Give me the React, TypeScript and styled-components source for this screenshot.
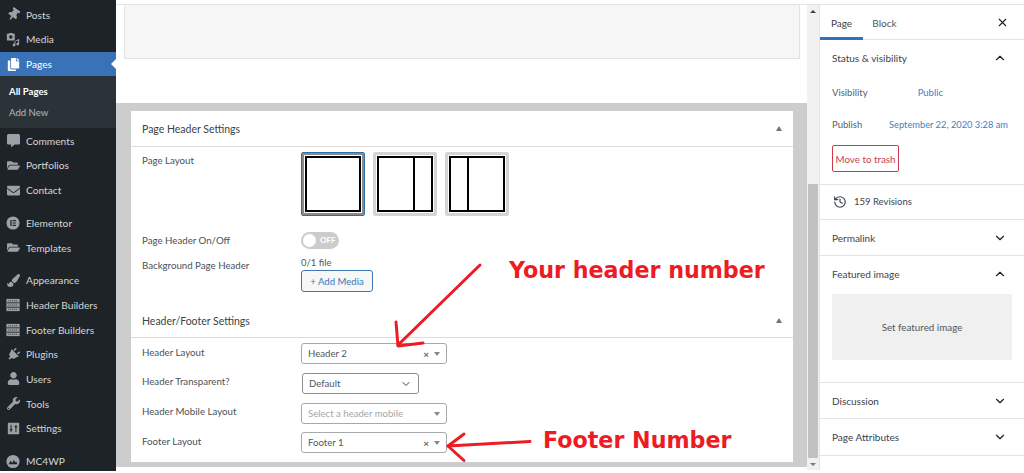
import React from "react";
import styled, { createGlobalStyle } from "styled-components";
import {
  FaThumbtack,
  FaCopy,
  FaCommentAlt,
  FaFolderOpen,
  FaEnvelope,
  FaPaintBrush,
  FaPlug,
  FaUser,
  FaWrench,
} from "react-icons/fa";
import { LuChevronUp, LuChevronDown, LuHistory, LuX } from "react-icons/lu";

const uiFont = `Lato, "Open Sans", sans-serif`;

const GlobalStyle = createGlobalStyle`
  html, body {
    margin: 0;
    padding: 0;
    background: #fff;
    overflow: hidden;
  }
  * { box-sizing: border-box; }
  body { font-family: ${uiFont}; }
`;

const Page = styled.div`
  position: relative;
  width: 1024px;
  height: 473px;
  overflow: hidden;
  background: #fff;
`;

const Frame = styled.div`
  display: flex;
  height: 471px;
  overflow: hidden;
`;

/* admin menu */
const Sidebar = styled.nav`
  width: 116px;
  flex: none;
  background: #1d2327;
  padding-top: 2.4px;
  color: #d3d6d9;
  font-size: 10.2px;
`;

const MenuRow = styled.div<{ $active?: boolean; $gap?: number }>`
  position: relative;
  display: flex;
  align-items: center;
  height: 24.7px;
  margin-top: ${({ $gap }) => $gap ?? 0}px;
  padding-left: 6px;
  gap: 6px;
  background: ${({ $active }) => ($active ? "#3a72b8" : "transparent")};
  color: ${({ $active }) => ($active ? "#fff" : "inherit")};
`;

const MenuIcon = styled.span<{ $active?: boolean }>`
  display: flex;
  align-items: center;
  justify-content: center;
  width: 14px;
  height: 14px;
  flex: none;
  color: ${({ $active }) => ($active ? "#fff" : "#9ca1a7")};
  font-size: 13px;
`;

const ActiveNotch = styled.span`
  position: absolute;
  right: 0;
  top: 7px;
  border-style: solid;
  border-width: 5.5px 5.5px 5.5px 0;
  border-color: transparent #fff transparent transparent;
`;

const SubMenu = styled.div`
  background: #2c3338;
  height: 52px;
  padding-top: 5px;
`;

const SubItem = styled.div<{ $current?: boolean }>`
  height: 21px;
  line-height: 21px;
  padding-left: 9px;
  font-size: 9.6px;
  font-weight: ${({ $current }) => ($current ? 700 : 400)};
  color: ${({ $current }) => ($current ? "#fff" : "#b4b9be")};
`;

/* editor column */
const Main = styled.main`
  flex: 1;
  display: flex;
  flex-direction: column;
  border-top: 1px solid #e4e4e4;
  margin-top: 4px;
  min-width: 0;
`;

const ContentBox = styled.div`
  margin-left: 8px;
  width: 676px;
  height: 54px;
  background: #f6f6f6;
  border: 1px solid #e2e2e2;
  border-top: none;
  flex: none;
`;

const MetaWrap = styled.div`
  margin-top: 44px;
  height: 364px;
  background: #cdcdcd;
  padding: 8px 14px 5px 15px;
`;

const MetaPanel = styled.div`
  height: 351px;
  background: #fff;
  color: #50575e;
  font-size: 9.6px;
`;

const MetaHeader = styled.div<{ $height: number; $drop?: number }>`
  display: flex;
  align-items: center;
  justify-content: space-between;
  height: ${({ $height }) => $height}px;
  padding: ${({ $drop }) => $drop ?? 0}px 11px 0;
  border-bottom: 1px solid #dcdcde;
  color: #3c434a;
  font-size: 10.5px;
`;

const UpCaret = styled.span`
  width: 0;
  height: 0;
  border-style: solid;
  border-width: 0 3.5px 5px 3.5px;
  border-color: transparent transparent #70757a transparent;
`;

const FormRow = styled.div<{ $height: number; $top?: number }>`
  display: grid;
  grid-template-columns: 159px 1fr;
  height: ${({ $height }) => $height}px;
  padding-left: 11px;
  padding-top: ${({ $top }) => $top ?? 0}px;
`;

const RowLabel = styled.label<{ $drop?: number }>`
  font-size: 9.7px;
  line-height: 14px;
  padding-top: ${({ $drop }) => $drop ?? 0}px;
  color: #4a5157;
`;

const LayoutChoices = styled.div`
  display: flex;
  gap: 8px;
`;

const LayoutChoice = styled.div<{ $selected?: boolean }>`
  width: 64px;
  height: 64px;
  padding: 3px;
  background: #fff;
  border: 1px solid ${({ $selected }) => ($selected ? "#2f6ea5" : "#d4d4d4")};
  border-radius: 2px;
  box-shadow: inset 0 0 0 2px ${({ $selected }) => ($selected ? "#8b8b8b" : "#d4d4d4")};
`;

const LayoutPicture = styled.div<{ $columns: string }>`
  display: grid;
  grid-template-columns: ${({ $columns }) => $columns};
  gap: 2px;
  height: 100%;
  background: #000;
  padding: 2px;
`;

const LayoutCell = styled.div`
  background: #fff;
`;

const Toggle = styled.div`
  position: relative;
  width: 38px;
  height: 17px;
  border-radius: 9px;
  background: #ccc;
  color: #fff;
  font-size: 8px;
  font-weight: 700;
  line-height: 16px;
  padding-left: 19px;
`;

const ToggleKnob = styled.span`
  position: absolute;
  left: 2px;
  top: 2px;
  width: 13px;
  height: 13px;
  border-radius: 50%;
  background: #fff;
`;

const FileCount = styled.div`
  font-size: 9.5px;
  line-height: 12px;
  color: #50575e;
`;

const AddMedia = styled.button`
  display: block;
  width: 72px;
  height: 22px;
  margin-top: 1px;
  padding: 0;
  background: #f6f7f7;
  border: 1px solid #3f78b5;
  border-radius: 3px;
  color: #3f78b5;
  font: 400 9.6px ${uiFont};
`;

const SelectBox = styled.div<{ $width: number; $offset?: number; $native?: boolean }>`
  display: flex;
  align-items: center;
  width: ${({ $width }) => $width}px;
  height: 21px;
  margin-left: ${({ $offset }) => $offset ?? 0}px;
  padding: 0 6px;
  border: 1px solid ${({ $native }) => ($native ? "#8c8f94" : "#a5a9ad")};
  border-radius: 3px;
  background: #fff;
  font-size: 9.6px;
  color: #50575e;
`;

const SelectValue = styled.span<{ $placeholder?: boolean }>`
  flex: 1;
  color: ${({ $placeholder }) => ($placeholder ? "#a4a7aa" : "#50575e")};
`;

const ClearMark = styled.span`
  color: #666;
  font-size: 10px;
  font-weight: 700;
  margin-right: 5px;
`;

const DownCaret = styled.span`
  width: 0;
  height: 0;
  border-style: solid;
  border-width: 4px 3.5px 0 3.5px;
  border-color: #888 transparent transparent transparent;
`;

/* scrollbar between editor and inspector */
const ScrollBar = styled.div`
  position: relative;
  width: 13px;
  flex: none;
  margin-top: 4px;
  height: 466px;
  background: #f1f1f1;
  border-top: 1px solid #e4e4e4;
  border-right: 1px solid #e4e4e4;
`;

const ScrollThumb = styled.div`
  position: absolute;
  left: 1px;
  right: 1px;
  top: 179px;
  height: 274px;
  background: #c1c1c1;
`;

const ScrollArrow = styled.span<{ $down?: boolean }>`
  position: absolute;
  left: 3px;
  ${({ $down }) => ($down ? "bottom: 4px;" : "top: 5px;")}
  border-style: solid;
  border-width: ${({ $down }) => ($down ? "3px 3px 0 3px" : "0 3px 3px 3px")};
  border-color: ${({ $down }) =>
    $down
      ? "#777 transparent transparent transparent"
      : "transparent transparent #444 transparent"};
`;

/* settings inspector */
const Inspector = styled.aside`
  width: 204px;
  height: 466px;
  flex: none;
  margin-top: 4px;
  border-top: 1px solid #e4e4e4;
  color: #3c434a;
  font-size: 10px;
  overflow: hidden;
`;

const Tabs = styled.div`
  display: flex;
  align-items: stretch;
  height: 35px;
  border-bottom: 1px solid #e2e4e7;
`;

const Tab = styled.div<{ $active?: boolean }>`
  display: flex;
  align-items: center;
  justify-content: center;
  width: 43px;
  height: 35px;
  color: ${({ $active }) => ($active ? "#3c434a" : "#50575e")};
  border-bottom: ${({ $active }) => ($active ? "3px solid #2f72b8" : "none")};
  padding-top: ${({ $active }) => ($active ? 3 : 0)}px;
`;

const TabClose = styled.span`
  margin-left: auto;
  margin-right: 15px;
  display: flex;
  align-items: center;
  font-size: 13px;
  color: #1e1e1e;
`;

const Section = styled.section<{ $height: number }>`
  height: ${({ $height }) => $height}px;
  padding: 0 12px;
  border-bottom: 1px solid #e2e4e7;
`;

const SectionHead = styled.div`
  display: flex;
  align-items: center;
  justify-content: space-between;
  height: 35px;
  margin-bottom: 1px;
  color: #3c434a;
  padding-right: 5px;
`;

const Caret = styled.span`
  display: flex;
  font-size: 14px;
  color: #1e1e1e;
`;

const InfoRow = styled.div`
  display: flex;
  justify-content: space-between;
  height: 32px;
  align-items: center;
  color: #555d66;
  font-size: 9.5px;
  padding-right: 4px;
`;

const InfoLink = styled.span<{ $shift?: number; $small?: boolean }>`
  color: #3f80c4;
  font-size: ${({ $small }) => ($small ? 9.3 : 9.5)}px;
  margin-right: ${({ $shift }) => $shift ?? 0}px;
`;

const TrashButton = styled.button`
  display: block;
  width: 67px;
  height: 27px;
  margin-top: 5px;
  padding: 0;
  border: 1px solid #cc3a48;
  border-radius: 2px;
  background: #fff;
  color: #c9414f;
  white-space: nowrap;
  font: 400 9.8px ${uiFont};
`;

const RevisionRow = styled.div`
  display: flex;
  align-items: center;
  gap: 7px;
  height: 33px;
  font-size: 9.5px;
  padding-left: 1px;
`;

const FeaturedBox = styled.div`
  display: flex;
  align-items: center;
  justify-content: center;
  width: 180px;
  height: 66px;
  margin-top: 3px;
  background: #f0f0f0;
  color: #50575e;
  font-size: 9.8px;
`;

/* hand-written notes drawn over the screenshot */
const NoteLayer = styled.svg`
  position: absolute;
  inset: 0;
  pointer-events: none;
`;

const NoteText = styled.div<{ $x: number; $y: number }>`
  position: absolute;
  left: ${({ $x }) => $x}px;
  top: ${({ $y }) => $y}px;
  color: #ed1c24;
  font: 700 22.2px/26px "DejaVu Sans", Verdana, sans-serif;
  white-space: nowrap;
`;

const MediaIcon = () => (
  <svg viewBox="0 0 16 16" width="15" height="15">
    <path
      d="M1 1.5h2l.6-1h3.8l.6 1h2v7.5H1zM5.5 3a2 2 0 1 0 0 4 2 2 0 0 0 0-4z"
      fill="currentColor"
      fillRule="evenodd"
    />
    <path
      d="M15 7v6.2a1.6 1.6 0 1 1-1.2-1.5V9.4l-3 .7v4.2a1.6 1.6 0 1 1-1.2-1.5v-2.4z"
      fill="currentColor"
    />
  </svg>
);

const ElementorIcon = () => (
  <svg viewBox="0 0 16 16" width="14" height="14">
    <circle cx="8" cy="8" r="7.5" fill="currentColor" />
    <path d="M5 4.5h1.4v7H5zM7.6 4.5h3.6v1.4H7.6zM7.6 7.3h3.6v1.4H7.6zM7.6 10.1h3.6v1.4H7.6z" fill="#1d2327" />
  </svg>
);

const BuilderIcon = () => (
  <svg viewBox="0 0 16 16" width="15" height="14">
    <rect x="0.5" y="1" width="15" height="14" fill="currentColor" />
    <path d="M1 5.5h14M1 10.5h14" stroke="#1d2327" strokeWidth="1" />
    <path d="M2.5 3.2h11M2.5 8h11M2.5 12.8h11" stroke="#1d2327" strokeWidth="0.8" strokeDasharray="1.4 0.8" />
  </svg>
);

const SettingsIcon = () => (
  <svg viewBox="0 0 16 16" width="13" height="13">
    <rect x="1" y="1" width="14" height="14" rx="1" fill="currentColor" />
    <path d="M5 3.5v9M11 3.5v9" stroke="#1d2327" strokeWidth="1.2" />
    <path d="M3.5 9.5h3M9.5 6h3" stroke="#1d2327" strokeWidth="1.6" />
  </svg>
);

const McIcon = () => (
  <svg viewBox="0 0 16 16" width="15" height="15">
    <circle cx="8" cy="8" r="7.5" fill="currentColor" />
    <path d="M3 11l2.2-4 2 2.6L9 6l1.5 3 1-1.2L13 11z" fill="#1d2327" />
  </svg>
);

const topItems = [
  { label: "Posts", icon: <FaThumbtack style={{ transform: "rotate(35deg)" }} /> },
  { label: "Media", icon: <MediaIcon /> },
];

const middleItems = [
  { label: "Comments", icon: <FaCommentAlt />, gap: 0 },
  { label: "Portfolios", icon: <FaFolderOpen />, gap: 0 },
  { label: "Contact", icon: <FaEnvelope />, gap: 0 },
  { label: "Elementor", icon: <ElementorIcon />, gap: 8 },
  { label: "Templates", icon: <FaFolderOpen />, gap: 0 },
  { label: "Appearance", icon: <FaPaintBrush />, gap: 8 },
  { label: "Header Builders", icon: <BuilderIcon />, gap: 0 },
  { label: "Footer Builders", icon: <BuilderIcon />, gap: 0 },
  { label: "Plugins", icon: <FaPlug style={{ transform: "rotate(45deg)" }} />, gap: 0 },
  { label: "Users", icon: <FaUser />, gap: 0 },
  { label: "Tools", icon: <FaWrench />, gap: 0 },
  { label: "Settings", icon: <SettingsIcon />, gap: 0 },
  { label: "MC4WP", icon: <McIcon />, gap: 8 },
];

const layouts = [
  { columns: "1fr", cells: 1, selected: true },
  { columns: "34px 1fr", cells: 2, selected: false },
  { columns: "1fr 34px", cells: 2, selected: false },
];

const App = () => {
  return (
    <Page>
      <GlobalStyle />
      <Frame>
        <Sidebar>
          {topItems.map((item) => (
            <MenuRow key={item.label}>
              <MenuIcon>{item.icon}</MenuIcon>
              {item.label}
            </MenuRow>
          ))}
          <MenuRow $active>
            <MenuIcon $active>
              <FaCopy />
            </MenuIcon>
            Pages
            <ActiveNotch />
          </MenuRow>
          <SubMenu>
            <SubItem $current>All Pages</SubItem>
            <SubItem>Add New</SubItem>
          </SubMenu>
          {middleItems.map((item) => (
            <MenuRow key={item.label} $gap={item.gap}>
              <MenuIcon>{item.icon}</MenuIcon>
              {item.label}
            </MenuRow>
          ))}
        </Sidebar>

        <Main>
          <ContentBox />
          <MetaWrap>
            <MetaPanel>
              <MetaHeader $height={36}>
                Page Header Settings
                <UpCaret />
              </MetaHeader>
              <FormRow $height={79} $top={5}>
                <RowLabel $drop={1}>Page Layout</RowLabel>
                <LayoutChoices>
                  {layouts.map((layout, index) => (
                    <LayoutChoice key={index} $selected={layout.selected}>
                      <LayoutPicture $columns={layout.columns}>
                        {Array.from({ length: layout.cells }).map((_, cell) => (
                          <LayoutCell key={cell} />
                        ))}
                      </LayoutPicture>
                    </LayoutChoice>
                  ))}
                </LayoutChoices>
              </FormRow>
              <FormRow $height={31} $top={6}>
                <RowLabel $drop={1}>Page Header On/Off</RowLabel>
                <Toggle>
                  <ToggleKnob />
                  OFF
                </Toggle>
              </FormRow>
              <FormRow $height={45}>
                <RowLabel $drop={1}>Background Page Header</RowLabel>
                <div>
                  <FileCount>0/1 file</FileCount>
                  <AddMedia>+ Add Media</AddMedia>
                </div>
              </FormRow>
              <MetaHeader $height={36} $drop={2}>
                Header/Footer Settings
                <UpCaret />
              </MetaHeader>
              <FormRow $height={30} $top={5}>
                <RowLabel $drop={2}>Header Layout</RowLabel>
                <SelectBox $width={146}>
                  <SelectValue>Header 2</SelectValue>
                  <ClearMark>×</ClearMark>
                  <DownCaret />
                </SelectBox>
              </FormRow>
              <FormRow $height={30} $top={5}>
                <RowLabel $drop={1}>Header Transparent?</RowLabel>
                <SelectBox $width={117} $offset={1} $native>
                  <SelectValue>Default</SelectValue>
                  <LuChevronDown size={12} color="#444" />
                </SelectBox>
              </FormRow>
              <FormRow $height={29} $top={5}>
                <RowLabel $drop={1}>Header Mobile Layout</RowLabel>
                <SelectBox $width={146}>
                  <SelectValue $placeholder>Select a header mobile</SelectValue>
                  <DownCaret />
                </SelectBox>
              </FormRow>
              <FormRow $height={30} $top={5}>
                <RowLabel $drop={2}>Footer Layout</RowLabel>
                <SelectBox $width={146}>
                  <SelectValue>Footer 1</SelectValue>
                  <ClearMark>×</ClearMark>
                  <DownCaret />
                </SelectBox>
              </FormRow>
            </MetaPanel>
          </MetaWrap>
        </Main>

        <ScrollBar>
          <ScrollArrow />
          <ScrollThumb />
          <ScrollArrow $down />
        </ScrollBar>

        <Inspector>
          <Tabs>
            <Tab $active>Page</Tab>
            <Tab>Block</Tab>
            <TabClose>
              <LuX />
            </TabClose>
          </Tabs>
          <Section $height={145}>
            <SectionHead>
              Status &amp; visibility
              <Caret>
                <LuChevronUp />
              </Caret>
            </SectionHead>
            <InfoRow>
              Visibility
              <InfoLink $shift={65}>Public</InfoLink>
            </InfoRow>
            <InfoRow>
              Publish
              <InfoLink $small>September 22, 2020 3:28 am</InfoLink>
            </InfoRow>
            <TrashButton>Move to trash</TrashButton>
          </Section>
          <Section $height={35}>
            <RevisionRow>
              <LuHistory size={14} />
              159 Revisions
            </RevisionRow>
          </Section>
          <Section $height={36}>
            <SectionHead>
              Permalink
              <Caret>
                <LuChevronDown />
              </Caret>
            </SectionHead>
          </Section>
          <Section $height={127}>
            <SectionHead>
              Featured image
              <Caret>
                <LuChevronUp />
              </Caret>
            </SectionHead>
            <FeaturedBox>Set featured image</FeaturedBox>
          </Section>
          <Section $height={36}>
            <SectionHead>
              Discussion
              <Caret>
                <LuChevronDown />
              </Caret>
            </SectionHead>
          </Section>
          <Section $height={37}>
            <SectionHead>
              Page Attributes
              <Caret>
                <LuChevronDown />
              </Caret>
            </SectionHead>
          </Section>
          <Section $height={36}>
            <SectionHead>
              Slider Revolution
              <Caret>
                <LuChevronDown />
              </Caret>
            </SectionHead>
          </Section>
        </Inspector>
      </Frame>

      <NoteLayer width="1024" height="473" viewBox="0 0 1024 473">
        <g fill="none" stroke="#ed1c24" strokeWidth="3" strokeLinecap="round" strokeLinejoin="round">
          <path d="M480 265L398 345" />
          <path d="M396 322L398 346L423 343" />
          <path d="M530 441.5L448 446" />
          <path d="M464 434L448 446L464 460.5" />
        </g>
      </NoteLayer>
      <NoteText $x={509} $y={257}>Your header number</NoteText>
      <NoteText $x={543} $y={427}>Footer Number</NoteText>
    </Page>
  );
};

export default App;
